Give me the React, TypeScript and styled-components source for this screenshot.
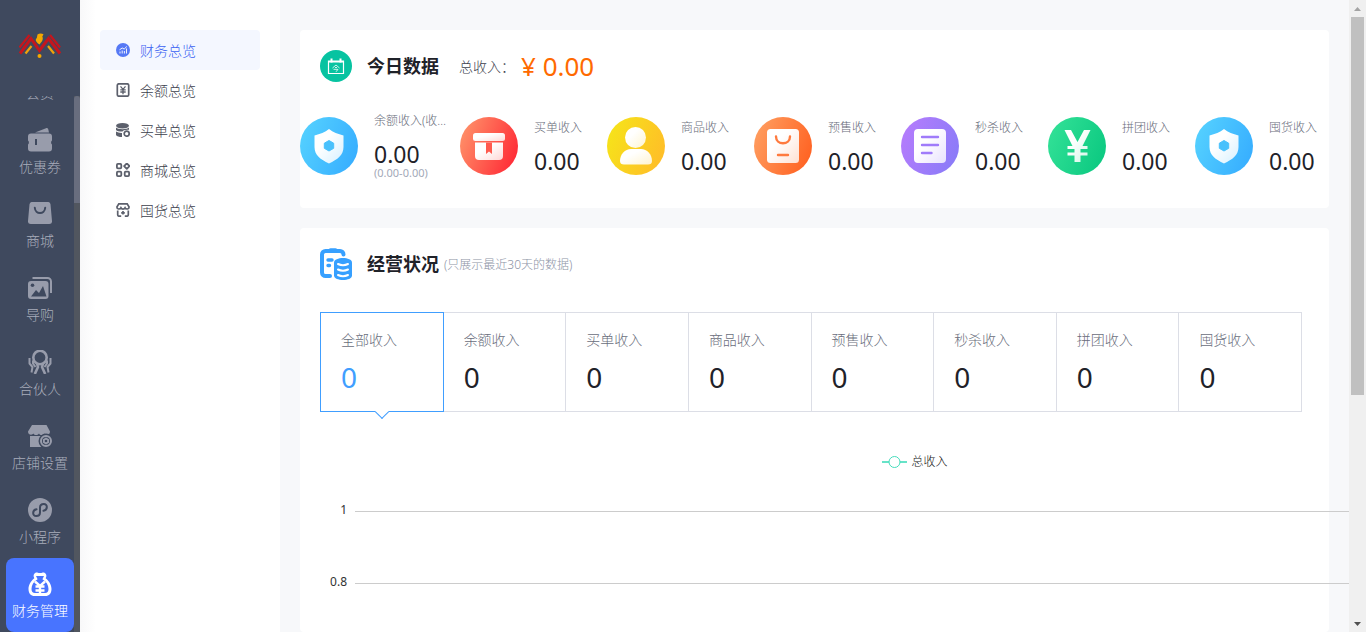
import React from "react";
import styled, { createGlobalStyle } from "styled-components";

const GlobalStyle = createGlobalStyle`
  * { box-sizing: border-box; }
  body {
    margin: 0;
    background: #f7f8fa;
    color: #1f2229;
    font-family: "Noto Sans", "Noto Sans CJK SC", sans-serif;
    font-size: 14px;
    font-weight: 300;
  }
  h2, p, ul, nav { margin: 0; padding: 0; }
  ul { list-style: none; }
  a { color: inherit; text-decoration: none; }
  svg { display: block; flex: none; }
`;

const Page = styled.div`
  display: flex;
  height: 100vh;
  overflow: hidden;
`;

/* ---------- primary sidebar ---------- */

const Sidebar = styled.aside`
  display: flex;
  flex-direction: column;
  flex: none;
  width: 80px;
  background: #3f495e;
`;

const Brand = styled.a`
  display: flex;
  align-items: center;
  justify-content: center;
  flex: none;
  height: 96px;
  padding-bottom: 4px;
`;

const SideScroll = styled.div`
  display: flex;
  flex: 1;
  min-height: 0;
`;

const SideNav = styled.nav`
  display: flex;
  flex: 1;
  flex-direction: column;
  justify-content: flex-end;
  overflow: hidden;
`;

const SideItem = styled.a<{ $active?: boolean }>`
  display: flex;
  flex: none;
  flex-direction: column;
  align-items: center;
  gap: 5px;
  height: 74px;
  margin-left: 6px;
  padding-top: 14px;
  border-radius: 8px;
  line-height: 20px;
  white-space: nowrap;
  background: ${(p) => (p.$active ? "#4874ff" : "transparent")};
  color: ${(p) => (p.$active ? "#fff" : "#989cab")};
`;

const SideLabel = styled.span<{ $active?: boolean }>`
  color: ${(p) => (p.$active ? "#fff" : "#a9adbb")};
`;

const SideTrack = styled.div`
  width: 6px;
  background: #51565f;
`;

const SideThumb = styled.div`
  height: 20%;
  border-radius: 3px 3px 0 0;
  background: #686d7e;
`;

/* ---------- secondary menu ---------- */

const SubPanel = styled.div`
  flex: none;
  width: 200px;
  padding: 30px 20px;
  background: linear-gradient(90deg, #f8f8f9, #fff 16px);
`;

const SubItem = styled.a<{ $active?: boolean }>`
  display: flex;
  align-items: center;
  gap: 10px;
  height: 40px;
  padding-left: 16px;
  border-radius: 4px;
  background: ${(p) => (p.$active ? "#f4f7ff" : "transparent")};
  color: ${(p) => (p.$active ? "#5578f5" : "#5c606c")};
`;

const SubLabel = styled.span<{ $active?: boolean }>`
  color: ${(p) => (p.$active ? "#3a62f2" : "#3c404c")};
`;

/* ---------- content ---------- */

const Main = styled.main`
  display: flex;
  flex: 1;
  flex-direction: column;
  gap: 20px;
  min-width: 0;
  padding: 30px 20px 0;
  overflow: hidden;
`;

const Card = styled.section<{ $grow?: boolean }>`
  flex: ${(p) => (p.$grow ? "1 0 auto" : "none")};
  padding-bottom: 18px;
  border-radius: 4px;
  background: #fff;
`;

const CardHead = styled.header`
  display: flex;
  align-items: center;
  height: 72px;
  padding: 0 20px;
`;

const CardTitle = styled.h2`
  margin-left: 15px;
  font-size: 18px;
  font-weight: 700;
  line-height: 24px;
`;

const TotalLabel = styled.span`
  margin-left: 20px;
  color: #3c404c;
`;

const TotalValue = styled.strong`
  margin-left: 6px;
  color: #ff6a00;
  font-size: 26px;
  font-weight: 400;
  line-height: 32px;
`;

const Note = styled.span`
  margin-left: 5px;
  color: #8d94a6;
  font-size: 12px;
`;

const Stats = styled.ul`
  display: grid;
  grid-template-columns: 160fr repeat(5, 147fr) 134fr;
  align-items: center;
  height: 88px;
`;

const Stat = styled.li`
  display: flex;
  align-items: center;
  gap: 16px;
  min-width: 0;
`;

const StatText = styled.div`
  width: 76px;
  min-width: 0;
  padding-bottom: 2px;
`;

const StatLabel = styled.p`
  overflow: hidden;
  color: #696d7b;
  font-size: 12px;
  line-height: 20px;
  white-space: nowrap;
  text-overflow: ellipsis;
`;

const StatValue = styled.p`
  padding-top: 11px;
  font-size: 23px;
  font-weight: 400;
  line-height: 24px;
`;

const StatRange = styled.p`
  color: #a3a9b8;
  font-size: 11px;
  font-weight: 400;
  line-height: 14px;
`;

const Tabs = styled.div`
  display: grid;
  grid-template-columns: repeat(8, 1fr);
  margin: 12px 27px 0 20px;
  border: 1px solid #dcdee6;
  border-left: 0;
`;

const Tab = styled.button<{ $active?: boolean }>`
  position: relative;
  height: 98px;
  padding: 0 0 0 20px;
  border: 0 solid ${(p) => (p.$active ? "#409eff" : "#dcdee6")};
  border-left-width: 1px;
  background: none;
  box-shadow: ${(p) =>
    p.$active ? "0 -1px #409eff, 0 1px #409eff, 1px -1px #409eff, 1px 1px #409eff" : "none"};
  color: ${(p) => (p.$active ? "#409eff" : "#1f2229")};
  font: inherit;
  text-align: left;
  cursor: pointer;
  z-index: ${(p) => (p.$active ? 1 : 0)};
`;

const TabPointer = styled.span`
  position: absolute;
  left: 50%;
  bottom: -6px;
  width: 10px;
  height: 10px;
  border: solid #409eff;
  border-width: 0 1px 1px 0;
  background: #fff;
  transform: translateX(-50%) rotate(45deg);
`;

const TabLabel = styled.span`
  display: block;
  color: #696d7b;
  line-height: 20px;
`;

const TabValue = styled.span`
  display: block;
  margin-top: 10px;
  font-size: 28px;
  font-weight: 400;
  line-height: 34px;
`;

/* The chart is wider than its card and runs on past the card's right edge. */
const Chart = styled.div`
  margin: 37px -181px 0 20px;
`;

const Legend = styled.div`
  display: flex;
  align-items: center;
  justify-content: center;
  gap: 4px;
  height: 24px;
  color: #111;
  font-size: 12px;
`;

const AxisRow = styled.div`
  display: flex;
  align-items: flex-end;
  gap: 8px;
  height: 72px;
  color: #333;
  font-size: 12px;
  font-weight: 400;
  line-height: 16px;

  &:first-child {
    height: 45px;
  }
`;

const AxisLabel = styled.span`
  width: 27px;
  text-align: right;
`;

const AxisLine = styled.div`
  flex: 1;
  height: 1px;
  margin-bottom: 6px;
  background: #ccc;
`;

/* ---------- page scrollbar ---------- */

const ScrollBar = styled.div`
  display: flex;
  flex: none;
  flex-direction: column;
  align-items: center;
  width: 17px;
  background: #f0f0f0;
`;

const ScrollThumb = styled.div`
  flex: 378;
  width: 13px;
  background: #c0c0c0;
`;

const ScrollRest = styled.div`
  flex: 220;
`;

/* ---------- drawings ---------- */

const Logo = () => (
  <svg width="42" height="26" viewBox="0 0 42 26" fill="none">
    <path d="M10.500 2 .5 14.500M31 2 41 14.500" stroke="#c5161d" strokeWidth="2.200" />
    <path d="M1 20.500 12 5.500 20.500 17.500 29.500 5.500 41 20.500" stroke="#c5161d" strokeWidth="3" />
    <path d="M6.500 20.500 12.500 13M35 20.500 29 13" stroke="#f0a30a" strokeWidth="2.200" />
    <path d="M18.500 1.500c2-1.500 4.500-1 6-.3l-1.200 2.300c1.500 3-.8 5.500-2.800 8-3-2-5-4.500-2.700-6.500z" fill="#f5a800" />
    <circle cx="20.500" cy="23" r="2" fill="#f5a800" />
  </svg>
);

const sideIcons: Record<string, (bg: string) => React.ReactNode> = {
  member: () => <circle cx="12" cy="12" r="10" fill="currentColor" />,
  coupon: (bg) => (
    <>
      <path d="M7 4.500 18 .2c1.200-.4 2 .3 2.300 1.300l.7 3z" fill="currentColor" />
      <path d="M3 5.500h18a3 3 0 0 1 3 3v4c-1.200.4-1.200 3.600 0 4v4a3 3 0 0 1-3 3H3a3 3 0 0 1-3-3v-4c1.200-.4 1.200-3.600 0-4v-4a3 3 0 0 1 3-3z" fill="currentColor" />
      <path d="M8 11v6" stroke={bg} strokeWidth="2" />
    </>
  ),
  mall: (bg) => (
    <>
      <path d="M4.500 0h15A2.700 2.700 0 0 1 22.500 2.300L24 19a2.700 2.700 0 0 1-2.700 3H2.700A2.700 2.700 0 0 1 0 19L1.500 2.300A2.700 2.700 0 0 1 4.500 0z" fill="currentColor" />
      <path d="M6.800 5.800c.5 7 9.900 7 10.400 0" stroke={bg} strokeWidth="2" strokeLinecap="round" />
    </>
  ),
  guide: (bg) => (
    <>
      <path d="M4.500 2H19.500A3.500 3.500 0 0 1 23 5.500V17" stroke="currentColor" strokeWidth="2" />
      <rect y="5" width="20.500" height="18" rx="3" fill="currentColor" />
      <circle cx="4.500" cy="9.300" r="1.800" fill={bg} />
      <path d="M3 20.500 8 14l3 3 4-7 3.500 10.500z" fill={bg} />
    </>
  ),
  partner: () => (
    <g stroke="currentColor" strokeWidth="2.600" strokeLinejoin="round">
      <circle cx="12" cy="7.500" r="6.700" />
      <path d="M9 13.500 10 17 6.800 24M15 13.500 14 17 17.200 24" />
      <path d="M1.500 8v5.500L4.500 17l-1 5.500M22.500 8v5.500L19.500 17l1 5.500M5 10.500v3L7.500 17M19 10.500v3L16.500 17" strokeWidth="2" />
    </g>
  ),
  shop: (bg) => (
    <>
      <path d="M4 1h14.500L22 7.500C22 11 18 11.500 16.500 9.500c-1.500 2-4.500 2-5.500 0-1.500 2-4.500 2-5.500 0C4 11.500 0 11 0 7.500z" fill="currentColor" />
      <path d="M2 12h19v8l-4 3H2z" fill="currentColor" />
      <circle cx="18" cy="17" r="7.500" fill={bg} />
      <circle cx="18" cy="17" r="5" stroke="currentColor" strokeWidth="2" />
      <path d="m18 13.500 3 1.700v3.600l-3 1.700-3-1.700v-3.600z" fill="currentColor" />
      <circle cx="18" cy="17" r="1.300" fill={bg} />
    </>
  ),
  mini: (bg) => (
    <>
      <circle cx="12" cy="12" r="12" fill="currentColor" />
      <path d="M8.500 11.300c-4.500.8-4.300 6.700-.3 6.700 2.300 0 3.800-1.500 3.800-3.500V9.500C12 7.500 13.500 6 15.800 6c4 0 4.200 5.900-.3 6.700" stroke={bg} strokeWidth="2" strokeLinecap="round" />
    </>
  ),
  finance: (bg) => (
    <>
      <path d="M7.500.8c1.500-.8 2.500.4 4.500.2 2 .2 3-1 4.500-.2 2 1 2.500 3 1.200 5.500C21 9 23.500 13 23.500 17c0 4.500-2.500 7-6 7h-11c-3.500 0-6-2.500-6-7C.5 13 3 9 6.300 6.300 5 3.800 5.500 1.800 7.500.8z" fill="currentColor" />
      <path d="M8 4h8l-1.600 3.200C18.500 9.500 20.500 13 20.500 17c0 2.500-1.200 4-3.500 4H7c-2.300 0-3.500-1.500-3.500-4 0-4 2-7.500 6.100-9.800z" fill={bg} />
      <path d="m7 9.500 5 4.500 5-4.500M12 13.500v8M7.500 14.500h9M7.500 18.500h9" stroke="currentColor" strokeWidth="2.400" />
    </>
  ),
};

const SideIcon = ({ name, bg }: { name: string; bg: string }) => (
  <svg width="24" height="24" viewBox="0 0 24 24" fill="none">
    {sideIcons[name](bg)}
  </svg>
);

const subIcons: Record<string, React.ReactNode> = {
  overview: (
    <>
      <circle cx="7" cy="7" r="7" fill="currentColor" />
      <path d="M4 10.500v-2M6.200 10.500V7.500M8.400 10.500v-2.500M10.500 10.500V5.500M3.500 6.800 6.200 5l2 1L10.800 3.500" stroke="#fff" strokeWidth=".9" />
    </>
  ),
  balance: (
    <g stroke="currentColor" strokeWidth="1.700">
      <rect x="1.300" y=".8" width="11.400" height="12.400" rx="1.500" />
      <path d="m4.500 3.300 2.500 3 2.500-3M7 6.300V11.300M4.300 6.800h5.400M4.300 9h5.400" strokeWidth="1.300" />
    </g>
  ),
  pay: (
    <>
      <ellipse cx="6.500" cy="2.800" rx="6.500" ry="2.800" fill="currentColor" />
      <path d="M0 4.500c2 2.300 11 2.300 13 0v2.300C8.500 6.500 7.500 7.500 6.500 8.500 3 8.500 1 8 0 7zM0 8.500c1.500 1 3.500 1.500 6 1.400V14C3 14 1 13.500 0 12z" fill="currentColor" />
      <circle cx="10.700" cy="10.700" r="2.500" stroke="currentColor" strokeWidth="1.700" />
    </>
  ),
  mall: (
    <g stroke="currentColor" strokeWidth="1.800">
      <rect x=".9" y=".9" width="4.400" height="4.400" rx="1" />
      <path d="m10.800.4 2.700 2.700-2.700 2.700-2.700-2.700z" strokeLinejoin="round" />
      <rect x=".9" y="8.700" width="4.400" height="4.400" rx="1" />
      <rect x="8.700" y="8.700" width="4.400" height="4.400" rx="1" />
    </g>
  ),
  stock: (
    <g stroke="currentColor" strokeWidth="1.700">
      <path d="M2.800.9h8.400L13.100 4c0 2.500-3.100 2.500-4 .8-1 1.700-3.200 1.700-4.200 0C4 6.500.9 6.500.9 4z" />
      <path d="M1.700 7.500v4.200c0 1 .5 1.500 1.500 1.500h2M12.300 7.500v4.200c0 1-.5 1.500-1.500 1.500h-2M7 8v3.500M5.200 9.800h3.600" />
    </g>
  ),
};

const SubIcon = ({ name }: { name: string }) => (
  <svg width="14" height="14" viewBox="0 0 14 14" fill="none">
    {subIcons[name]}
  </svg>
);

const TodayIcon = () => (
  <svg width="32" height="32" viewBox="0 0 32 32" fill="none">
    <circle cx="16" cy="16" r="16" fill="#07c3a1" />
    <path d="M8.500 11h15v12.500h-15zM8.500 12h15" stroke="#fff" strokeWidth="1.200" />
    <path d="M11.500 8.500v4M20.500 8.500v4" stroke="#fff" strokeWidth="2" />
    <path d="m12.500 18 3.500-3 3.500 3M15 17.500h2M13.500 19.300h4.500l-2 2.500" stroke="#fff" strokeWidth=".8" />
  </svg>
);

const BusinessIcon = () => (
  <svg width="32" height="32" viewBox="0 0 32 32" fill="none">
    <g stroke="#37a0ff" strokeWidth="4" strokeLinecap="round">
      <path d="M10 28H5.500A3.500 3.500 0 0 1 2 24.500V6.500A3.500 3.500 0 0 1 5.500 3H20A3.500 3.500 0 0 1 23.500 6.500" />
      <path d="M10.500 2.300h5" />
      <path d="M8 12h4M8 17.500h1.500" strokeWidth="3.400" />
    </g>
    <path d="M14 14.500c0-6 18-6 18 0v13c0 6-18 6-18 0z" fill="#37a0ff" />
    <path d="M18 16c3 1.500 7 1.500 10 0M18 21.500c3 1.500 7 1.500 10 0M18 27c3 1.500 7 1.500 10 0" stroke="#fff" strokeWidth="2" strokeLinecap="round" />
  </svg>
);

type StatKind = "shield" | "box" | "user" | "bag" | "note" | "yen";

const statColors: Record<StatKind, [string, string, string]> = {
  shield: ["#54d0ff", "#37aeff", "#49c1fc"],
  box: ["#ff8f68", "#ff2a36", "#ff5a4e"],
  user: ["#f6e31a", "#ffbd28", "#fbd020"],
  bag: ["#ff9c5e", "#ff6222", "#ff7a3e"],
  note: ["#b47cfc", "#8a7bf8", "#a07bfa"],
  yen: ["#31e096", "#0cc981", "#1cd48b"],
};

const statShapes: Record<StatKind, (fill: string, bg: string) => React.ReactNode> = {
  shield: (fill, bg) => (
    <>
      <path d="M29 12c4 3.500 9 5 14.500 6.500V30c0 8-6 12.500-14.500 16.500C20.500 42.500 14.500 38 14.500 30V18.500C20 17 25 15.500 29 12z" fill={fill} />
      <path d="m29 23.500 4.700 2.700v5.100L29 34l-4.700-2.700v-5.100z" fill={bg} stroke={bg} strokeLinejoin="round" />
    </>
  ),
  box: (fill, bg) => (
    <>
      <rect x="13" y="16" width="32" height="8" rx="2.500" fill={fill} />
      <path d="M15 25.500h28V39a4 4 0 0 1-4 4H19a4 4 0 0 1-4-4z" fill={fill} />
      <path d="M26 25.500h6V37l-3-2.500-3 2.500z" fill={bg} />
    </>
  ),
  user: (fill) => (
    <>
      <circle cx="28.500" cy="20.500" r="10.500" fill={fill} />
      <path d="M13 44c0-7 5-12 11-12h10c6 0 11 5 11 12 0 2.500-1.500 3.500-4 3.500H17c-2.500 0-4-1-4-3.500z" fill={fill} />
    </>
  ),
  bag: (fill, bg) => (
    <>
      <rect x="13" y="12" width="32" height="34" rx="3.500" fill={fill} />
      <path d="M22 19.500c0 9 14 9 14 0M24 38h10" stroke={bg} strokeWidth="2.400" strokeLinecap="round" />
    </>
  ),
  note: (fill, bg) => (
    <>
      <rect x="13" y="12" width="32" height="34" rx="4" fill={fill} />
      <path d="M21 20h16M21 28h16M21 36h9.500" stroke={bg} strokeWidth="2.400" strokeLinecap="round" />
    </>
  ),
  yen: (fill) => (
    <path d="M16.500 13H23l6.500 12L36 13h6.500L34.500 29h5v3h-7v3.500h7v3h-7V45h-6v-6.500h-7v-3h7V32h-7v-3h5z" fill={fill} />
  ),
};

const StatIcon = ({ kind, id }: { kind: StatKind; id: string }) => (
  <svg width="58" height="58" viewBox="0 0 58 58" fill="none">
    <defs>
      <linearGradient id={`${id}-disc`} x1="0" y1="0.300" x2="1" y2="0.700">
        <stop offset="0" stopColor={statColors[kind][0]} />
        <stop offset="1" stopColor={statColors[kind][1]} />
      </linearGradient>
      <linearGradient id={`${id}-shape`} x1="0.400" y1="0.300" x2="1" y2="0.900">
        <stop offset="0" stopColor="#fff" />
        <stop offset="1" stopColor="#fff" stopOpacity="0.800" />
      </linearGradient>
    </defs>
    <circle cx="29" cy="29" r="29" fill={`url(#${id}-disc)`} />
    {statShapes[kind](`url(#${id}-shape)`, statColors[kind][2])}
  </svg>
);

const LegendMark = () => (
  <svg width="25" height="14" viewBox="0 0 25 14" fill="none">
    <path d="M0 8h25" stroke="#67e3c8" strokeWidth="2" />
    <circle cx="12.500" cy="8" r="5.500" fill="#fff" stroke="#45dcbb" />
  </svg>
);

const Arrow = ({ down }: { down?: boolean }) => (
  <svg width="17" height="17" viewBox="0 0 17 17">
    <path d={down ? "M5 7h7l-3.500 4z" : "M5 11h7L8.500 7z"} fill={down ? "#505050" : "#a3a3a3"} />
  </svg>
);

/* ---------- data ---------- */

const sideItems = [
  { icon: "member", label: "会员" },
  { icon: "coupon", label: "优惠券" },
  { icon: "mall", label: "商城" },
  { icon: "guide", label: "导购" },
  { icon: "partner", label: "合伙人" },
  { icon: "shop", label: "店铺设置" },
  { icon: "mini", label: "小程序" },
  { icon: "finance", label: "财务管理", active: true },
];

const subItems = [
  { icon: "overview", label: "财务总览", active: true },
  { icon: "balance", label: "余额总览" },
  { icon: "pay", label: "买单总览" },
  { icon: "mall", label: "商城总览" },
  { icon: "stock", label: "囤货总览" },
];

const stats: { kind: StatKind; label: string; range?: string }[] = [
  { kind: "shield", label: "余额收入(收入-退款)", range: "(0.00-0.00)" },
  { kind: "box", label: "买单收入" },
  { kind: "user", label: "商品收入" },
  { kind: "bag", label: "预售收入" },
  { kind: "note", label: "秒杀收入" },
  { kind: "yen", label: "拼团收入" },
  { kind: "shield", label: "囤货收入" },
];

const tabs = ["全部收入", "余额收入", "买单收入", "商品收入", "预售收入", "秒杀收入", "拼团收入", "囤货收入"];

export default function App() {
  return (
    <Page>
      <GlobalStyle />
      <Sidebar>
        <Brand href="#" aria-label="首页">
          <Logo />
        </Brand>
        <SideScroll>
          <SideNav>
            {sideItems.map((item) => (
              <SideItem key={item.label} href="#" $active={item.active}>
                <SideIcon name={item.icon} bg={item.active ? "#4874ff" : "#3f495e"} />
                <SideLabel $active={item.active}>{item.label}</SideLabel>
              </SideItem>
            ))}
          </SideNav>
          <SideTrack>
            <SideThumb />
          </SideTrack>
        </SideScroll>
      </Sidebar>

      <SubPanel>
        <nav>
          {subItems.map((item) => (
            <SubItem key={item.label} href="#" $active={item.active}>
              <SubIcon name={item.icon} />
              <SubLabel $active={item.active}>{item.label}</SubLabel>
            </SubItem>
          ))}
        </nav>
      </SubPanel>

      <Main>
        <Card>
          <CardHead>
            <TodayIcon />
            <CardTitle>今日数据</CardTitle>
            <TotalLabel>总收入：</TotalLabel>
            <TotalValue>¥ 0.00</TotalValue>
          </CardHead>
          <Stats>
            {stats.map((stat, i) => (
              <Stat key={stat.label}>
                <StatIcon kind={stat.kind} id={`stat-${i}`} />
                <StatText>
                  <StatLabel>{stat.label}</StatLabel>
                  <StatValue>0.00</StatValue>
                  {stat.range && <StatRange>{stat.range}</StatRange>}
                </StatText>
              </Stat>
            ))}
          </Stats>
        </Card>

        <Card $grow>
          <CardHead>
            <BusinessIcon />
            <CardTitle>经营状况</CardTitle>
            <Note>(只展示最近30天的数据)</Note>
          </CardHead>
          <Tabs>
            {tabs.map((label, i) => (
              <Tab key={label} type="button" $active={i === 0}>
                <TabLabel>{label}</TabLabel>
                <TabValue>0</TabValue>
                {i === 0 && <TabPointer />}
              </Tab>
            ))}
          </Tabs>
          <Chart>
            <Legend>
              <LegendMark />
              总收入
            </Legend>
            <div>
              {["1", "0.8"].map((tick) => (
                <AxisRow key={tick}>
                  <AxisLabel>{tick}</AxisLabel>
                  <AxisLine />
                </AxisRow>
              ))}
            </div>
          </Chart>
        </Card>
      </Main>

      <ScrollBar>
        <Arrow />
        <ScrollThumb />
        <ScrollRest />
        <Arrow down />
      </ScrollBar>
    </Page>
  );
}
